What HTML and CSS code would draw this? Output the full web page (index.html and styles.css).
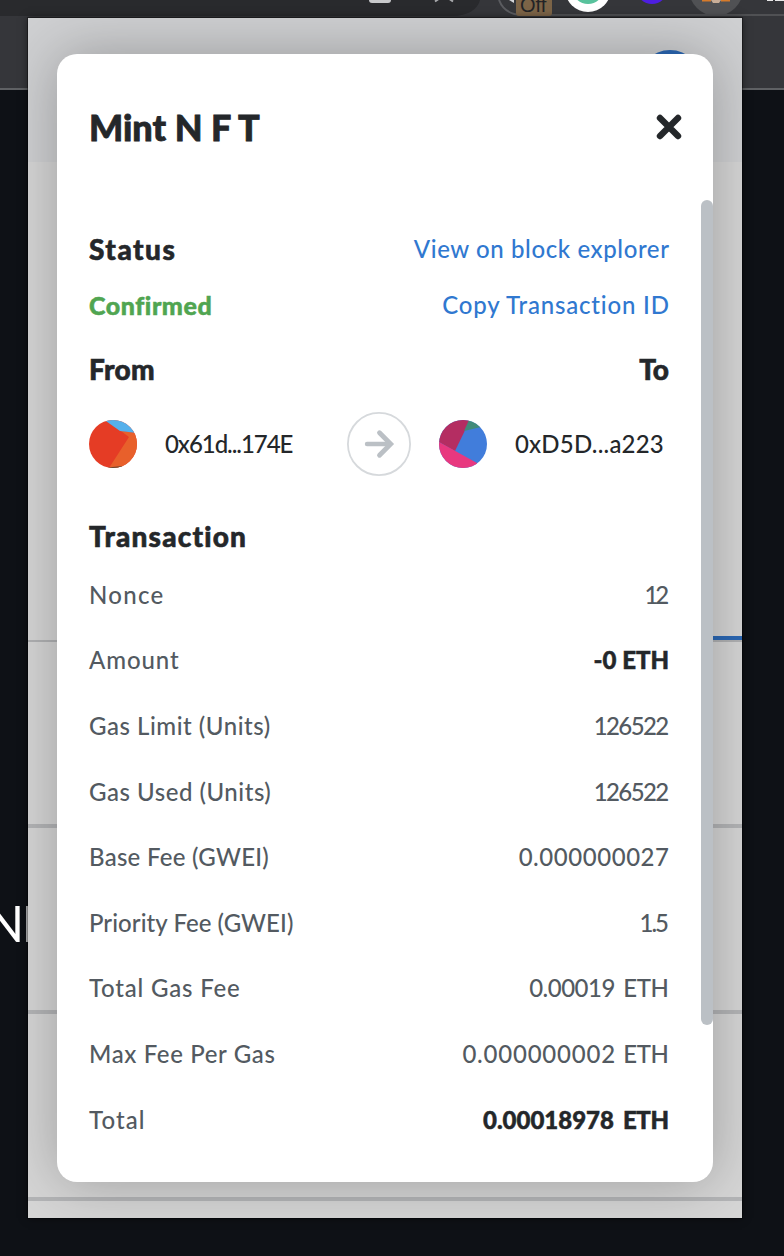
FILE: index.html
```
<!DOCTYPE html>
<html lang="en">
<head>
<meta charset="utf-8">
<title>Mint N F T</title>
<link rel="stylesheet" href="styles.css">
</head>
<body>
<div class="desktop">
  <div class="browser">
    <svg class="toolbar" width="784" height="18" viewBox="0 0 784 18">
      <rect width="784" height="18" fill="#35363a"/>
      <path d="M0 0H480C478 9 468 16 452 16H0Z" fill="#292a2d"/>
      <rect x="369" y="-8" width="22" height="11" rx="3" fill="#c8c9cb"/>
      <path d="M435 1.500l5-3.500M453 1.500l-5-3.500" fill="none" stroke="#a9aaad" stroke-width="2"/>
      <path d="M520 15H784" stroke="#505154" stroke-width="2"/>
      <path d="M499 0C502 8 508 14 520 15" fill="none" stroke="#5b5c60" stroke-width="2"/>
      <path d="M509 0h5v3z" fill="#d5d7db"/>
      <rect x="516" y="-6" width="36" height="22" rx="3" fill="#7c6447"/>
      <text class="badge-text" x="520" y="12">Off</text>
      <circle cx="588" cy="-11" r="23" fill="#fff"/>
      <circle cx="588" cy="-12" r="16" fill="#58c29c"/>
      <circle cx="652" cy="-12" r="16" fill="#4d1ee0"/>
      <circle cx="716" cy="-11" r="27" fill="#505154"/>
      <path d="M702 0h9M721 0h9" stroke="#d67b2b" stroke-width="3"/>
      <path d="M711 0h10l-2 3h-6z" fill="#c9ae98"/>
      <path d="M767 0h6M775 0h9" stroke="#e8e8e8" stroke-width="2"/>
    </svg>
    <div class="bookmarks"></div>
    <div class="page"><span class="page-text">NF</span></div>
  </div>

  <div class="popup">
    <div class="popup-header"><span class="account"></span></div>
    <div class="popup-tabs"></div>
    <div class="popup-item"></div>
    <div class="popup-item"></div>
    <div class="popup-item popup-item-last"></div>

    <section class="modal">
      <header class="modal-header">
        <h1 class="title">Mint N F T</h1>
        <svg class="close" width="26" height="26" viewBox="0 0 26 26"><path d="M4 4L22 22M22 4L4 22" stroke="#24272a" stroke-width="6.400" stroke-linecap="round"/></svg>
      </header>
      <div class="modal-body">
        <div class="line status-line"><h2 class="heading status">Status</h2><a class="link explorer">View on block explorer</a></div>
        <div class="line confirm-line"><span class="confirmed">Confirmed</span><a class="link copy">Copy Transaction ID</a></div>
        <div class="line parties-line"><h2 class="heading from">From</h2><h2 class="heading to">To</h2></div>
        <div class="parties">
          <svg class="avatar" width="48" height="48" viewBox="0 0 48 48">
            <clipPath id="from-clip"><circle cx="24" cy="24" r="24"/></clipPath>
            <g clip-path="url(#from-clip)">
              <rect width="48" height="48" fill="#e53c25"/>
              <path d="M32 11L48 13V48H20L40 17Z" fill="#e8602b"/>
              <path d="M14 -1H48V13L31 11Z" fill="#55b0eb"/>
              <path d="M19 47.500L33 46V48H19Z" fill="#654b36"/>
            </g>
          </svg>
          <span class="address from-address">0x61d...174E</span>
          <svg class="arrow" width="64" height="64" viewBox="0 0 64 64">
            <circle cx="32" cy="32" r="31.100" fill="#fff" stroke="#d6d9dc" stroke-width="1.800"/>
            <path d="M20 32H43" fill="none" stroke="#bbc0c5" stroke-width="4.400" stroke-linecap="round"/>
            <path d="M32.500 20.800L43.700 32L32.500 43.200" fill="none" stroke="#bbc0c5" stroke-width="4.800" stroke-linecap="round"/>
          </svg>
          <svg class="avatar" width="48" height="48" viewBox="0 0 48 48">
            <clipPath id="to-clip"><circle cx="24" cy="24" r="24"/></clipPath>
            <g clip-path="url(#to-clip)">
              <rect width="48" height="48" fill="#417ddb"/>
              <path d="M0 0H31L16 31L0 22Z" fill="#b42d62"/>
              <path d="M0 22L38 43V48H0Z" fill="#e8387f"/>
              <path d="M30 0L25 11L42 7V0Z" fill="#418b7a"/>
            </g>
          </svg>
          <span class="address to-address">0xD5D...a223</span>
        </div>
        <h2 class="heading transaction">Transaction</h2>
        <div class="row"><span class="label nonce">Nonce</span><span class="value v-nonce">12</span></div>
        <div class="row"><span class="label amount">Amount</span><span class="value strong v-amount">-0 ETH</span></div>
        <div class="row"><span class="label gas-limit">Gas Limit (Units)</span><span class="value v-units">126522</span></div>
        <div class="row"><span class="label gas-used">Gas Used (Units)</span><span class="value v-units">126522</span></div>
        <div class="row"><span class="label base-fee">Base Fee (GWEI)</span><span class="value v-base">0.000000027</span></div>
        <div class="row"><span class="label priority">Priority Fee (GWEI)</span><span class="value v-priority">1.5</span></div>
        <div class="row"><span class="label gas-fee">Total Gas Fee</span><span class="value"><span class="n-gas">0.00019</span><span class="unit">ETH</span></span></div>
        <div class="row"><span class="label max-fee">Max Fee Per Gas</span><span class="value"><span class="n-max">0.000000002</span><span class="unit">ETH</span></span></div>
        <div class="row"><span class="label total">Total</span><span class="value strong"><span>0.00018978</span><span class="unit">ETH</span></span></div>
      </div>
      <span class="scrollbar"></span>
    </section>
  </div>
</div>
</body>
</html>
```
FILE: styles.css
```
* { box-sizing: border-box; }
body { margin: 0; font-family: Lato, "Liberation Sans", sans-serif; font-variant-ligatures: none; color: #24272a; }
h1, h2 { margin: 0; }
.desktop { position: relative; width: 784px; height: 1256px; overflow: hidden; background: #0e1116; }
.browser { display: flex; flex-direction: column; height: 100%; }
.toolbar { display: block; flex: none; }
.badge-text { font: 20px "Liberation Sans", sans-serif; fill: #222326; }
.bookmarks { flex: none; height: 72px; background: #35363a; border-bottom: 2px solid #5f6164; }
.page { flex: 1; padding-top: 808px; }
.page-text { display: block; margin-left: -14px; font-size: 50px; line-height: 50px; letter-spacing: -2.500px; color: #fff; }

.popup {
  position: absolute; left: 28px; top: 18px; width: 714px; height: 1200px;
  display: flex; flex-direction: column; overflow: hidden;
  background: #d6d6d6;
  box-shadow: 0 0 0 1px rgba(0, 0, 0, .35), 0 0 8px rgba(0, 0, 0, .5);
}
.popup-header { flex: none; height: 144px; background: #cfd0d2; padding: 32px 40px; display: flex; justify-content: flex-end; }
.account { width: 64px; height: 64px; border-radius: 50%; background: #2b68b5; }
.popup-tabs { flex: none; height: 480px; border-bottom: 2px solid #b1b2b4; background: linear-gradient(#2b68b5, #2b68b5) right bottom / 357px 4px no-repeat; }
.popup-item { flex: none; height: 186px; border-bottom: 4px solid #b4b5b7; }
.popup-item-last { height: 187px; }

.modal {
  position: absolute; left: 29px; top: 36px; width: 656px; height: 1128px;
  border-radius: 20px; background: #fff; box-shadow: 0 0 57px rgba(0, 0, 0, .27);
}
.modal-header { height: 146px; padding: 0 32px 1px; display: flex; justify-content: space-between; align-items: center; }
.title { font-size: 36px; line-height: 44px; font-weight: 900; white-space: nowrap; -webkit-text-stroke: .8px currentColor; }
.close { margin-right: -1px; }
.modal-body { padding: 21px 44px 0 32px; }
.line { display: flex; justify-content: space-between; align-items: center; white-space: nowrap; }
.status-line, .confirm-line { height: 56px; }
.parties-line { height: 71px; }
.heading { font-size: 28px; line-height: 40px; font-weight: 900; -webkit-text-stroke: .6px currentColor; }
.link, .label, .value, .address { font-size: 24px; line-height: 34px; font-weight: 500; white-space: nowrap; }
.link { color: #3078d0; }
.confirmed { font-size: 25px; line-height: 34px; font-weight: 900; letter-spacing: .550px; color: #50a551; -webkit-text-stroke: .5px currentColor; }
.parties { display: flex; align-items: center; height: 80px; }
.avatar { flex: none; }
.from-address { width: 182px; padding-left: 28px; margin-right: 28px; letter-spacing: -1.050px; }
.arrow { flex: none; margin-right: 28px; }
.to-address { padding-left: 28px; letter-spacing: .200px; }
.transaction { height: 78px; padding-top: 32px; letter-spacing: 1.200px; }
.row { display: flex; justify-content: space-between; align-items: center; height: 65.600px; color: #535a61; }
.value { display: flex; gap: 9px; }
.strong { font-weight: 900; color: #24272a; -webkit-text-stroke: .5px currentColor; }
.scrollbar { position: absolute; right: 0; top: 146px; width: 12px; height: 825px; border-radius: 6px; background: #bbc0c5; }

/* Tracking per text; right-aligned texts offset their trailing space. */
.status { letter-spacing: 1.500px; }
.from { letter-spacing: .300px; }
.explorer { letter-spacing: .600px; margin-right: -.600px; }
.copy { letter-spacing: .820px; margin-right: -.820px; }
.nonce { letter-spacing: 1.300px; }
.amount { letter-spacing: .900px; }
.gas-limit, .gas-used { letter-spacing: .530px; }
.base-fee { letter-spacing: .270px; }
.priority { letter-spacing: .060px; }
.gas-fee { letter-spacing: .800px; }
.max-fee { letter-spacing: .630px; }
.total { letter-spacing: 1.100px; }
.v-nonce { letter-spacing: -3.200px; margin-right: 3px; }
.v-units { letter-spacing: -1.600px; margin-right: 1.400px; }
.v-base { letter-spacing: .550px; margin-right: -.550px; }
.v-priority { letter-spacing: -2px; margin-right: 2px; }
.n-gas { letter-spacing: -.500px; margin-right: -.500px; }
.n-max { letter-spacing: .780px; margin-right: -1.500px; }
.unit { letter-spacing: -.400px; margin-right: .400px; }
```
